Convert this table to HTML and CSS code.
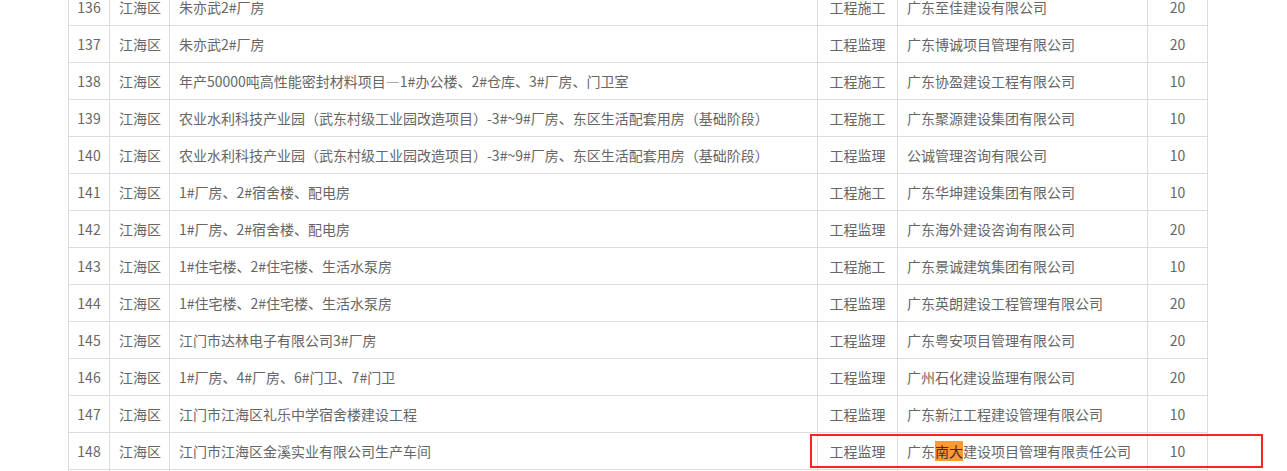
FILE: index.html
```html
<!DOCTYPE html>
<html lang="zh">
<head>
<meta charset="utf-8">
<link rel="stylesheet" href="styles.css">
</head>
<body>
<div class="wrap">
<table class="list">
<colgroup>
<col class="c-no"><col class="c-area"><col class="c-proj"><col class="c-type"><col class="c-co"><col class="c-score">
</colgroup>
<tbody>
<tr><td class="ctr">136</td><td>江海区</td><td>朱亦武2#厂房</td><td class="ctr">工程施工</td><td>广东至佳建设有限公司</td><td class="ctr">20</td></tr>
<tr><td class="ctr">137</td><td>江海区</td><td>朱亦武2#厂房</td><td class="ctr">工程监理</td><td>广东博诚项目管理有限公司</td><td class="ctr">20</td></tr>
<tr><td class="ctr">138</td><td>江海区</td><td>年产50000吨高性能密封材料项目—1#办公楼、2#仓库、3#厂房、门卫室</td><td class="ctr">工程施工</td><td>广东协盈建设工程有限公司</td><td class="ctr">10</td></tr>
<tr><td class="ctr">139</td><td>江海区</td><td>农业水利科技产业园（武东村级工业园改造项目）-3#~9#厂房、东区生活配套用房（基础阶段）</td><td class="ctr">工程施工</td><td>广东聚源建设集团有限公司</td><td class="ctr">10</td></tr>
<tr><td class="ctr">140</td><td>江海区</td><td>农业水利科技产业园（武东村级工业园改造项目）-3#~9#厂房、东区生活配套用房（基础阶段）</td><td class="ctr">工程监理</td><td>公诚管理咨询有限公司</td><td class="ctr">10</td></tr>
<tr><td class="ctr">141</td><td>江海区</td><td>1#厂房、2#宿舍楼、配电房</td><td class="ctr">工程施工</td><td>广东华坤建设集团有限公司</td><td class="ctr">10</td></tr>
<tr><td class="ctr">142</td><td>江海区</td><td>1#厂房、2#宿舍楼、配电房</td><td class="ctr">工程监理</td><td>广东海外建设咨询有限公司</td><td class="ctr">20</td></tr>
<tr><td class="ctr">143</td><td>江海区</td><td>1#住宅楼、2#住宅楼、生活水泵房</td><td class="ctr">工程施工</td><td>广东景诚建筑集团有限公司</td><td class="ctr">10</td></tr>
<tr><td class="ctr">144</td><td>江海区</td><td>1#住宅楼、2#住宅楼、生活水泵房</td><td class="ctr">工程监理</td><td>广东英朗建设工程管理有限公司</td><td class="ctr">20</td></tr>
<tr><td class="ctr">145</td><td>江海区</td><td>江门市达林电子有限公司3#厂房</td><td class="ctr">工程监理</td><td>广东粤安项目管理有限公司</td><td class="ctr">20</td></tr>
<tr><td class="ctr">146</td><td>江海区</td><td>1#厂房、4#厂房、6#门卫、7#门卫</td><td class="ctr">工程监理</td><td>广州石化建设监理有限公司</td><td class="ctr">20</td></tr>
<tr><td class="ctr">147</td><td>江海区</td><td>江门市江海区礼乐中学宿舍楼建设工程</td><td class="ctr">工程监理</td><td>广东新江工程建设管理有限公司</td><td class="ctr">10</td></tr>
<tr><td class="ctr">148</td><td>江海区</td><td>江门市江海区金溪实业有限公司生产车间</td><td class="ctr">工程监理</td><td>广东<span class="hl">南大</span>建设项目管理有限责任公司</td><td class="ctr">10</td></tr>
<tr><td class="ctr">&nbsp;</td><td></td><td></td><td></td><td></td><td></td></tr>
</tbody>
</table>
<div class="mark"></div>
</div>
</body>
</html>
```

FILE: styles.css
```css
html, body {
  margin: 0;
  padding: 0;
  background: #fff;
  overflow: hidden;
}
body {
  font-family: "Microsoft YaHei", "Noto Sans CJK SC", "Noto Sans", sans-serif;
  font-size: 14px;
  color: #666;
}
.wrap {
  position: relative;
  margin: -12px 0 0 68px;
  width: 1140px;
}
.list {
  border-collapse: collapse;
  table-layout: fixed;
  width: 1140px;
}
.c-no { width: 41px; }
.c-area { width: 60px; }
.c-proj { width: 648px; }
.c-type { width: 80px; }
.c-co { width: 250px; }
.c-score { width: 60px; }
.list tr {
  height: 37px;
}
.list td {
  border: 1px solid #ddd;
  height: 37px;
  padding: 0 0 0 9px;
  box-sizing: border-box;
  white-space: nowrap;
  overflow: hidden;
  line-height: 20px;
}
.list td.ctr {
  text-align: center;
  padding: 0;
}
.hl {
  background: #ff9933;
  color: #333;
}
.mark {
  position: absolute;
  left: 742px;
  top: 446px;
  width: 453px;
  height: 34px;
  border: 2px solid #f22;
  box-sizing: border-box;
}
```
